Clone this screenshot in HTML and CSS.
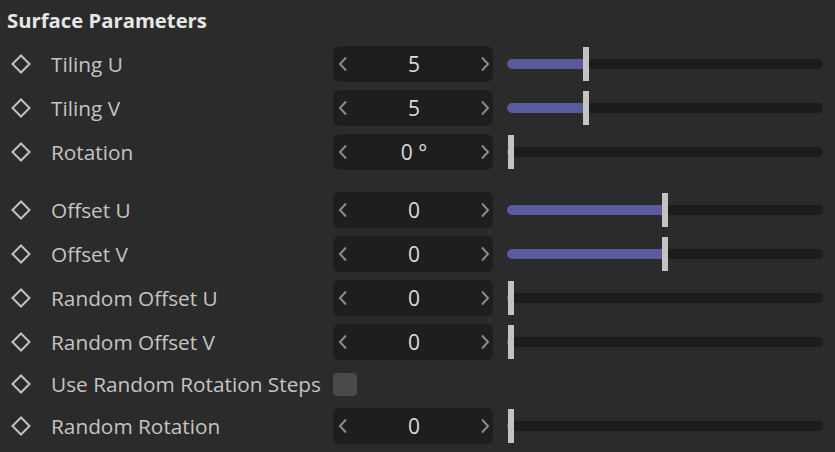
FILE: index.html
```html
<!DOCTYPE html>
<html>
<head>
<meta charset="utf-8">
<link rel="stylesheet" href="styles.css">
</head>
<body>
<div class="panel">
  <div class="title">Surface Parameters</div>

  <div class="row">
    <span class="key"><svg width="20" height="20" viewBox="0 0 20 20"><path d="M10 1.5 L18.5 10 L10 18.5 L1.5 10 Z" fill="none" stroke="#c2c2c2" stroke-width="2"/></svg></span>
    <span class="label">Tiling U</span>
    <div class="field"><span class="arr"><svg width="10" height="16" viewBox="0 0 10 16"><path d="M8 1.5 L2 8 L8 14.5" fill="none" stroke="#8a8a8a" stroke-width="2"/></svg></span><span class="val">5</span><span class="arr"><svg width="10" height="16" viewBox="0 0 10 16"><path d="M2 1.5 L8 8 L2 14.5" fill="none" stroke="#8a8a8a" stroke-width="2"/></svg></span></div>
    <div class="slider"><div class="track"><div class="fill" style="width:25%"></div><div class="handle" style="left:calc(25% - 3px)"></div></div></div>
  </div>

  <div class="row">
    <span class="key"><svg width="20" height="20" viewBox="0 0 20 20"><path d="M10 1.5 L18.5 10 L10 18.5 L1.5 10 Z" fill="none" stroke="#c2c2c2" stroke-width="2"/></svg></span>
    <span class="label">Tiling V</span>
    <div class="field"><span class="arr"><svg width="10" height="16" viewBox="0 0 10 16"><path d="M8 1.5 L2 8 L8 14.5" fill="none" stroke="#8a8a8a" stroke-width="2"/></svg></span><span class="val">5</span><span class="arr"><svg width="10" height="16" viewBox="0 0 10 16"><path d="M2 1.5 L8 8 L2 14.5" fill="none" stroke="#8a8a8a" stroke-width="2"/></svg></span></div>
    <div class="slider"><div class="track"><div class="fill" style="width:25%"></div><div class="handle" style="left:calc(25% - 3px)"></div></div></div>
  </div>

  <div class="row">
    <span class="key"><svg width="20" height="20" viewBox="0 0 20 20"><path d="M10 1.5 L18.5 10 L10 18.5 L1.5 10 Z" fill="none" stroke="#c2c2c2" stroke-width="2"/></svg></span>
    <span class="label">Rotation</span>
    <div class="field"><span class="arr"><svg width="10" height="16" viewBox="0 0 10 16"><path d="M8 1.5 L2 8 L8 14.5" fill="none" stroke="#8a8a8a" stroke-width="2"/></svg></span><span class="val">0 °</span><span class="arr"><svg width="10" height="16" viewBox="0 0 10 16"><path d="M2 1.5 L8 8 L2 14.5" fill="none" stroke="#8a8a8a" stroke-width="2"/></svg></span></div>
    <div class="slider"><div class="track"><div class="fill" style="width:2%"></div><div class="handle" style="left:1px"></div></div></div>
  </div>

  <div class="spacer"></div>

  <div class="row">
    <span class="key"><svg width="20" height="20" viewBox="0 0 20 20"><path d="M10 1.5 L18.5 10 L10 18.5 L1.5 10 Z" fill="none" stroke="#c2c2c2" stroke-width="2"/></svg></span>
    <span class="label">Offset U</span>
    <div class="field"><span class="arr"><svg width="10" height="16" viewBox="0 0 10 16"><path d="M8 1.5 L2 8 L8 14.5" fill="none" stroke="#8a8a8a" stroke-width="2"/></svg></span><span class="val">0</span><span class="arr"><svg width="10" height="16" viewBox="0 0 10 16"><path d="M2 1.5 L8 8 L2 14.5" fill="none" stroke="#8a8a8a" stroke-width="2"/></svg></span></div>
    <div class="slider"><div class="track"><div class="fill" style="width:50%"></div><div class="handle" style="left:calc(50% - 3px)"></div></div></div>
  </div>

  <div class="row">
    <span class="key"><svg width="20" height="20" viewBox="0 0 20 20"><path d="M10 1.5 L18.5 10 L10 18.5 L1.5 10 Z" fill="none" stroke="#c2c2c2" stroke-width="2"/></svg></span>
    <span class="label">Offset V</span>
    <div class="field"><span class="arr"><svg width="10" height="16" viewBox="0 0 10 16"><path d="M8 1.5 L2 8 L8 14.5" fill="none" stroke="#8a8a8a" stroke-width="2"/></svg></span><span class="val">0</span><span class="arr"><svg width="10" height="16" viewBox="0 0 10 16"><path d="M2 1.5 L8 8 L2 14.5" fill="none" stroke="#8a8a8a" stroke-width="2"/></svg></span></div>
    <div class="slider"><div class="track"><div class="fill" style="width:50%"></div><div class="handle" style="left:calc(50% - 3px)"></div></div></div>
  </div>

  <div class="row">
    <span class="key"><svg width="20" height="20" viewBox="0 0 20 20"><path d="M10 1.5 L18.5 10 L10 18.5 L1.5 10 Z" fill="none" stroke="#c2c2c2" stroke-width="2"/></svg></span>
    <span class="label">Random Offset U</span>
    <div class="field"><span class="arr"><svg width="10" height="16" viewBox="0 0 10 16"><path d="M8 1.5 L2 8 L8 14.5" fill="none" stroke="#8a8a8a" stroke-width="2"/></svg></span><span class="val">0</span><span class="arr"><svg width="10" height="16" viewBox="0 0 10 16"><path d="M2 1.5 L8 8 L2 14.5" fill="none" stroke="#8a8a8a" stroke-width="2"/></svg></span></div>
    <div class="slider"><div class="track"><div class="fill" style="width:2%"></div><div class="handle" style="left:1px"></div></div></div>
  </div>

  <div class="row">
    <span class="key"><svg width="20" height="20" viewBox="0 0 20 20"><path d="M10 1.5 L18.5 10 L10 18.5 L1.5 10 Z" fill="none" stroke="#c2c2c2" stroke-width="2"/></svg></span>
    <span class="label">Random Offset V</span>
    <div class="field"><span class="arr"><svg width="10" height="16" viewBox="0 0 10 16"><path d="M8 1.5 L2 8 L8 14.5" fill="none" stroke="#8a8a8a" stroke-width="2"/></svg></span><span class="val">0</span><span class="arr"><svg width="10" height="16" viewBox="0 0 10 16"><path d="M2 1.5 L8 8 L2 14.5" fill="none" stroke="#8a8a8a" stroke-width="2"/></svg></span></div>
    <div class="slider"><div class="track"><div class="fill" style="width:2%"></div><div class="handle" style="left:1px"></div></div></div>
  </div>

  <div class="row row-check">
    <span class="key"><svg width="20" height="20" viewBox="0 0 20 20"><path d="M10 1.5 L18.5 10 L10 18.5 L1.5 10 Z" fill="none" stroke="#c2c2c2" stroke-width="2"/></svg></span>
    <span class="label">Use Random Rotation Steps</span>
    <div class="checkcell"><span class="checkbox"></span></div>
  </div>

  <div class="row">
    <span class="key"><svg width="20" height="20" viewBox="0 0 20 20"><path d="M10 1.5 L18.5 10 L10 18.5 L1.5 10 Z" fill="none" stroke="#c2c2c2" stroke-width="2"/></svg></span>
    <span class="label">Random Rotation</span>
    <div class="field"><span class="arr"><svg width="10" height="16" viewBox="0 0 10 16"><path d="M8 1.5 L2 8 L8 14.5" fill="none" stroke="#8a8a8a" stroke-width="2"/></svg></span><span class="val">0</span><span class="arr"><svg width="10" height="16" viewBox="0 0 10 16"><path d="M2 1.5 L8 8 L2 14.5" fill="none" stroke="#8a8a8a" stroke-width="2"/></svg></span></div>
    <div class="slider"><div class="track"><div class="fill" style="width:2%"></div><div class="handle" style="left:1px"></div></div></div>
  </div>
</div>
</body>
</html>
```

FILE: styles.css
```css
html, body {
  margin: 0;
  padding: 0;
  background: #2b2b2b;
}
body {
  width: 835px;
  height: 452px;
  overflow: hidden;
  font-family: "Open Sans", "Noto Sans", "Liberation Sans", sans-serif;
  color: #c4c4c4;
}
.panel {
  display: flex;
  flex-direction: column;
}
.title {
  height: 42px;
  box-sizing: border-box;
  padding: 6px 0 0 7px;
  font-size: 20.3px;
  font-weight: 700;
  color: #e6e6e6;
  line-height: 28px;
}
.row {
  height: 44px;
  display: grid;
  grid-template-columns: 51px 282px 160px 316px;
  align-items: center;
}
.row-check {
  height: 40px;
}
.spacer {
  height: 14px;
}
.key {
  display: flex;
  justify-content: flex-start;
  padding-left: 11px;
  align-items: center;
}
.key svg { display: block; }
.label {
  font-size: 20.8px;
  line-height: 26px;
  white-space: nowrap;
}
.field {
  height: 36px;
  background: #1e1e1e;
  border-radius: 7px;
  display: flex;
  align-items: center;
  justify-content: space-between;
  padding: 0 3px 0 5px;
  box-sizing: border-box;
}
.arr {
  display: flex;
  align-items: center;
  width: 10px;
}
.arr svg { display: block; }
.val {
  font-size: 21px;
  color: #dcdcdc;
  line-height: 26px;
}
.slider {
  margin-left: 14px;
  width: 316px;
  height: 36px;
  display: flex;
  align-items: center;
}
.track {
  position: relative;
  width: 100%;
  height: 10px;
  background: #1c1c1c;
  border-radius: 5px;
}
.fill {
  height: 100%;
  background: #585c9e;
  border-radius: 5px 0 0 5px;
}
.handle {
  position: absolute;
  top: -12px;
  width: 6px;
  height: 34px;
  background: #c3c3c3;
}
.checkcell {
  display: flex;
  align-items: center;
}
.checkbox {
  width: 24px;
  height: 23px;
  background: #4a4a4a;
  border-radius: 4px;
}
```
